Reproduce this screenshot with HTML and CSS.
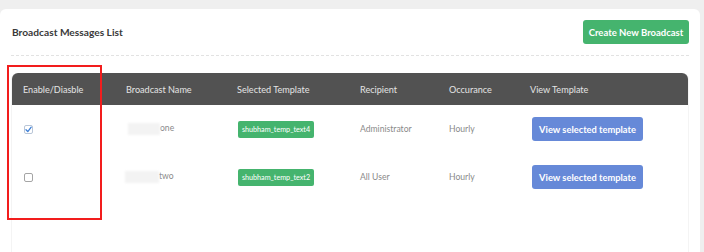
FILE: index.html
```html
<!DOCTYPE html>
<html lang="en">
<head>
    <meta charset="UTF-8">
    <meta name="viewport" content="width=device-width, initial-scale=1.0">
    <title>Broadcast Messages List</title>
    <link rel="stylesheet" href="styles.css">
</head>
<body>
    <div class="card">
        <!-- Header -->
        <div class="card-head">
            <h2 class="card-title">Broadcast Messages List</h2>
            <button class="btn btn-create">Create New Broadcast</button>
        </div>

        <!-- Broadcast table -->
        <div class="table-wrap">
            <table class="broadcast-table">
                <colgroup>
                    <col class="c-enable">
                    <col class="c-name">
                    <col class="c-template">
                    <col class="c-recipient">
                    <col class="c-occur">
                    <col class="c-view">
                </colgroup>
                <thead>
                    <tr>
                        <th>Enable/Diasble</th>
                        <th>Broadcast Name</th>
                        <th>Selected Template</th>
                        <th>Recipient</th>
                        <th>Occurance</th>
                        <th>View Template</th>
                    </tr>
                </thead>
                <tbody>
                    <tr>
                        <td>
                            <span class="check checked">
                                <svg viewBox="0 0 9 9" width="9" height="9"><path d="M2 4.8 L3.8 6.6 L7.2 2.2" fill="none" stroke="#3d7fd6" stroke-width="1.3" stroke-linecap="round" stroke-linejoin="round"/></svg>
                            </span>
                        </td>
                        <td><span class="name-blur b1"></span>one</td>
                        <td><span class="badge">shubham_temp_text4</span></td>
                        <td>Administrator</td>
                        <td>Hourly</td>
                        <td><button class="btn btn-view">View selected template</button></td>
                    </tr>
                    <tr>
                        <td><span class="check"></span></td>
                        <td><span class="name-blur b2"></span>two</td>
                        <td><span class="badge">shubham_temp_text2</span></td>
                        <td>All User</td>
                        <td>Hourly</td>
                        <td><button class="btn btn-view">View selected template</button></td>
                    </tr>
                </tbody>
            </table>
        </div>

        <!-- highlight box -->
        <div class="highlight"></div>
    </div>
</body>
</html>
```

FILE: styles.css
```css
* {
    margin: 0;
    padding: 0;
    box-sizing: border-box;
    font-family: 'Lato', sans-serif;
}

body {
    background: #efefef;
    height: 252px;
    overflow: hidden;
}

.card {
    position: relative;
    width: 700px;
    min-height: 243px;
    margin-top: 9px;
    padding: 0 11px;
    background: #fff;
    border-radius: 6px 6px 0 0;
}

/* Header */
.card-head {
    display: flex;
    justify-content: space-between;
    align-items: center;
    height: 47px;
    padding: 0 0 0 1px;
    border-bottom: 1px dashed #e2e2e2;
}

.card-title {
    font-size: 10.2px;
    font-weight: 700;
    color: #3a3a3a;
}

.btn {
    border: none;
    color: #fff;
    font-weight: 700;
    border-radius: 3px;
}

.btn-create {
    width: 106px;
    height: 24px;
    background: #45b46e;
    font-size: 9.5px;
}

/* Table */
.table-wrap {
    margin-top: 17px;
    min-height: 200px;
    border: 1px solid #f4f4f4;
    border-top: none;
    border-radius: 6px 6px 0 0;
}

.broadcast-table {
    width: 100%;
    border-collapse: collapse;
    table-layout: fixed;
}

.c-enable { width: 103px; }
.c-name { width: 111px; }
.c-template { width: 123px; }
.c-recipient { width: 89px; }
.c-occur { width: 81px; }

.broadcast-table th {
    height: 32px;
    padding-left: 11px;
    text-align: left;
    font-size: 9.1px;
    font-weight: 400;
    color: #e4e4e4;
    background: #525252;
}

.broadcast-table th:first-child { border-top-left-radius: 6px; }
.broadcast-table th:last-child { border-top-right-radius: 6px; }

.broadcast-table td {
    height: 48px;
    padding-left: 11px;
    font-size: 8.6px;
    color: #8a8a8a;
    vertical-align: middle;
}

.check {
    display: block;
    width: 9px;
    height: 9px;
    margin-left: 1px;
    border: 1px solid #a5a5a5;
    border-radius: 2px;
}

.check.checked {
    border-color: #b9c6d8;
}

.check svg {
    display: block;
    margin: -1px;
}

.name-blur {
    display: inline-block;
    height: 12px;
    vertical-align: middle;
    background: #f3f3f3;
    filter: blur(0.8px);
}

.name-blur.b1 { width: 32px; margin-left: 2px; }
.name-blur.b2 { width: 34px; margin-left: -1px; }

.badge {
    display: inline-block;
    width: 76px;
    height: 17px;
    margin-left: 1px;
    line-height: 17px;
    text-align: center;
    background: #45b46e;
    color: #fff;
    font-size: 7.2px;
    border-radius: 2px;
}

.btn-view {
    width: 111px;
    height: 24px;
    margin-left: 2px;
    background: #6689d8;
    font-size: 9.3px;
}

.highlight {
    position: absolute;
    left: 7px;
    top: 56px;
    width: 95px;
    height: 155px;
    border: 2px solid #f21d1d;
}
```
